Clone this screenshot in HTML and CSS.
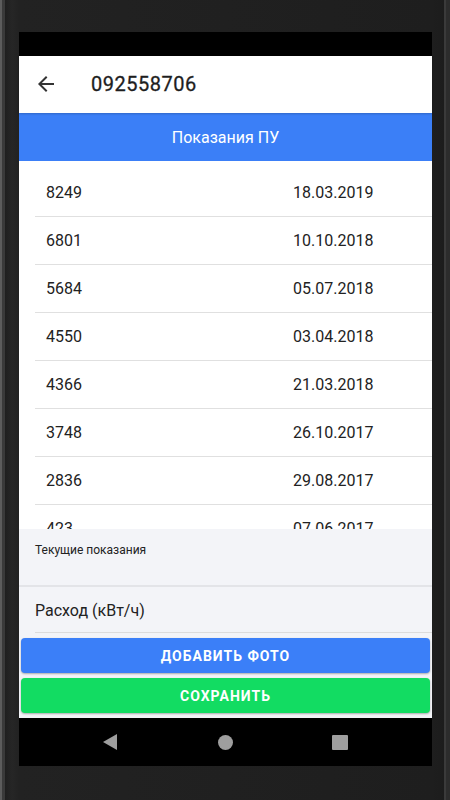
FILE: index.html
```html
<!DOCTYPE html>
<html lang="ru">
<head>
    <meta charset="UTF-8">
    <meta name="viewport" content="width=device-width, initial-scale=1.0">
    <title>Показания ПУ</title>
    <link rel="stylesheet" href="styles.css">
</head>
<body>

    <div class="device">
        <div class="screen">
            <div class="status-bar"></div>

            <div class="app">
                <header class="toolbar">
                    <svg class="back" width="24" height="24" viewBox="0 0 24 24">
                        <path d="M20 11H7.83l5.59-5.59L12 4l-8 8 8 8 1.41-1.41L7.83 13H20v-2z" fill="#333"/>
                    </svg>
                    <h1>092558706</h1>
                </header>

                <div class="section-title">Показания ПУ</div>

                <ul class="readings">
                    <li><span>8249</span><span>18.03.2019</span></li>
                    <li><span>6801</span><span>10.10.2018</span></li>
                    <li><span>5684</span><span>05.07.2018</span></li>
                    <li><span>4550</span><span>03.04.2018</span></li>
                    <li><span>4366</span><span>21.03.2018</span></li>
                    <li><span>3748</span><span>26.10.2017</span></li>
                    <li><span>2836</span><span>29.08.2017</span></li>
                    <li><span>423</span><span>07.06.2017</span></li>
                </ul>

                <div class="form">
                    <div class="field-current">
                        <label>Текущие показания</label>
                    </div>
                    <div class="field-usage">
                        <span>Расход (кВт/ч)</span>
                    </div>
                    <div class="actions">
                        <button class="btn btn-blue">Добавить фото</button>
                        <button class="btn btn-green">Сохранить</button>
                    </div>
                </div>
            </div>

            <nav class="nav-bar">
                <span class="nav-back"></span>
                <span class="nav-home"></span>
                <span class="nav-recent"></span>
            </nav>
        </div>
    </div>

</body>
</html>
```

FILE: styles.css
```css
/* Basic Styles */
body {
    margin: 0;
    padding: 0;
    font-family: Roboto, "Noto Sans", sans-serif;
    background-color: #222;
}

.device {
    width: 450px;
    height: 800px;
    box-sizing: border-box;
    padding: 32px 18px 34px 19px;
    background:
        linear-gradient(to right, #5c5c5c 0, #5c5c5c 2px, #3a3a3a 2px, #3a3a3a 5px, #1f1f1f 5px, #262626 12px, #222 19px, #1e1e1e 433px, #1c1c1c 444px, #3a3a3a 444px, #3a3a3a 446px, #2c2c2c 446px);
    overflow: hidden;
}

.screen {
    height: 734px;
    display: flex;
    flex-direction: column;
    background-color: #000;
}

.status-bar {
    height: 24px;
    background-color: #000;
}

.app {
    height: 662px;
    display: flex;
    flex-direction: column;
    background-color: #fff;
}

/* Toolbar */
.toolbar {
    height: 57px;
    flex: none;
    display: flex;
    align-items: center;
    box-sizing: border-box;
    padding-bottom: 1px;
    background-color: #fff;
    box-shadow: 0 1px 2px rgba(0, 0, 0, 0.2);
    position: relative;
    z-index: 1;
}

.back {
    margin-left: 15px;
}

.toolbar h1 {
    margin: 0 0 0 33px;
    font-size: 20px;
    font-weight: 400;
    color: #1e1e1e;
    letter-spacing: 0.5px;
    -webkit-text-stroke: 0.3px #1e1e1e;
}

.section-title {
    height: 48px;
    flex: none;
    display: flex;
    align-items: center;
    justify-content: center;
    background-color: #3b7ff7;
    color: #fff;
    font-size: 16px;
}

/* Readings list */
.readings {
    height: 368px;
    flex: none;
    margin: 0;
    padding: 8px 0 0 16px;
    box-sizing: border-box;
    list-style: none;
    overflow: hidden;
}

.readings li {
    height: 48px;
    box-sizing: border-box;
    display: grid;
    grid-template-columns: 247px 1fr;
    align-items: center;
    padding-left: 11px;
    border-bottom: 1px solid #e0e0e0;
    font-size: 16px;
    color: #222;
}

/* Form */
.form {
    flex: 1;
    display: flex;
    flex-direction: column;
    background-color: #f3f4f8;
}

.field-current {
    height: 58px;
    flex: none;
    padding: 10px 16px 0;
    box-sizing: border-box;
    border-bottom: 2px solid #e3e4e8;
}

.field-current label {
    font-size: 12px;
    color: #222;
}

.field-usage {
    height: 46px;
    flex: none;
    margin-left: 16px;
    box-sizing: border-box;
    display: flex;
    align-items: center;
    padding-top: 1px;
    border-bottom: 1px solid #dcdcdc;
    font-size: 16px;
    color: #222;
}

.actions {
    display: flex;
    flex-direction: column;
    gap: 5px;
    padding: 5px 2px 0;
}

.btn {
    height: 35px;
    border: none;
    border-radius: 4px;
    color: #fff;
    font-family: Roboto, sans-serif;
    font-size: 14px;
    font-weight: 700;
    text-transform: uppercase;
    letter-spacing: 1px;
    box-shadow: 0 1px 2px rgba(0, 0, 0, 0.3);
    cursor: pointer;
}

.btn-blue {
    background-color: #3b7ff8;
}

.btn-green {
    background-color: #12dc62;
}

/* Navigation bar */
.nav-bar {
    height: 48px;
    display: flex;
    align-items: center;
    background-color: #000;
}

.nav-back {
    width: 0;
    height: 0;
    margin-left: 84px;
    border-top: 8px solid transparent;
    border-bottom: 8px solid transparent;
    border-right: 14px solid #9e9e9e;
}

.nav-home {
    width: 15px;
    height: 15px;
    margin-left: 101px;
    border-radius: 50%;
    background-color: #9e9e9e;
}

.nav-recent {
    width: 16px;
    height: 15px;
    margin-left: 99px;
    border-radius: 1px;
    background-color: #9e9e9e;
}
```
